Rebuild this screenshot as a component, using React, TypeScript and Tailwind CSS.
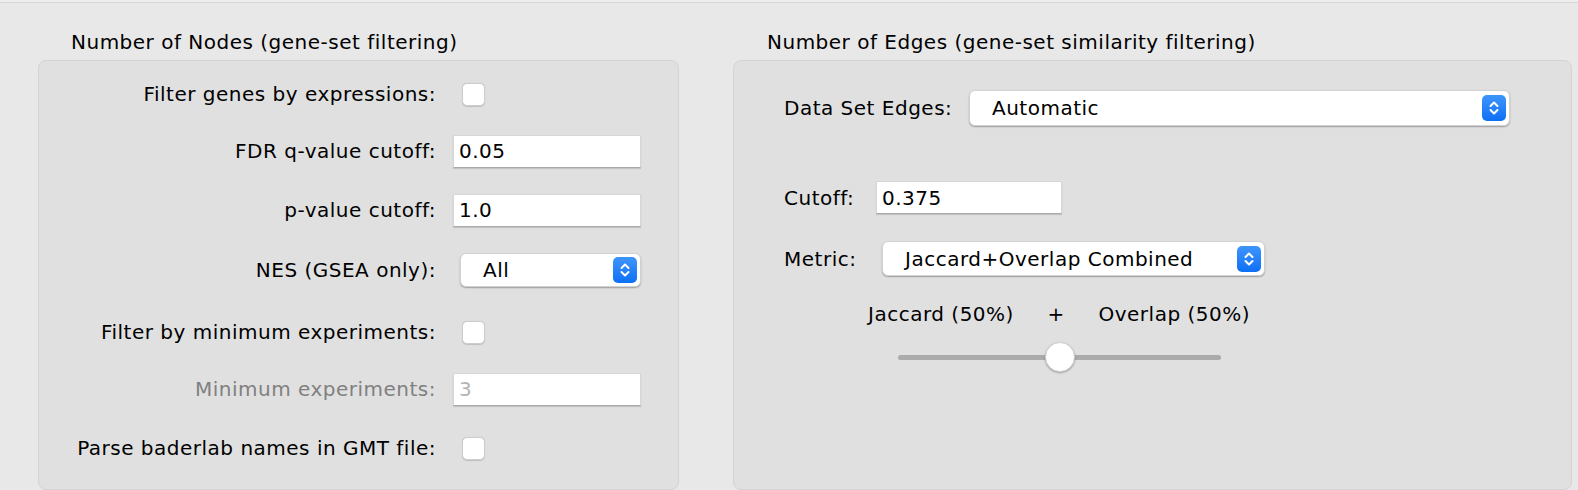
import React from "react";

const font = { fontFamily: '"DejaVu Sans", "Liberation Sans", sans-serif' };

const Stepper = () => (
  <div className="w-[24px] h-[26px] rounded-[5px] bg-gradient-to-b from-[#3d95fb] to-[#0c6ff5] flex items-center justify-center shrink-0">
    <svg width="12" height="18" viewBox="0 0 12 18" fill="none">
      <path d="M2.5 7 L6 3.5 L9.5 7" stroke="white" strokeWidth="2" strokeLinecap="round" strokeLinejoin="round" />
      <path d="M2.5 11 L6 14.5 L9.5 11" stroke="white" strokeWidth="2" strokeLinecap="round" strokeLinejoin="round" />
    </svg>
  </div>
);

const Select = ({ value, className }: { value: string; className: string }) => (
  <div
    className={`bg-white rounded-[6px] border border-[#d2d2d2] shadow-[0_1px_1.5px_rgba(0,0,0,0.3)] flex items-center justify-between pr-[3px] ${className}`}
  >
    <span className="pl-[22px] text-black">{value}</span>
    <Stepper />
  </div>
);

const TextInput = ({ value, className, disabled }: { value: string; className: string; disabled?: boolean }) => (
  <div
    className={`bg-white border border-[#d6d6d6] border-b-[#a9a9a9] shadow-[0_1px_1px_rgba(0,0,0,0.12)] flex items-center pl-[5px] ${disabled ? "text-[#b4b4b4]" : "text-black"} ${className}`}
  >
    {value}
  </div>
);

const Checkbox = () => (
  <div className="w-[23px] h-[23px] ml-[26px] rounded-[5px] bg-white border border-[#cdcdcd] shadow-[0_0.5px_1px_rgba(0,0,0,0.15)]" />
);

const Row = ({ label, children, className, muted }: { label: string; children: React.ReactNode; className: string; muted?: boolean }) => (
  <div className={`flex items-center h-[36px] ${className}`}>
    <div className={`w-[397px] text-right whitespace-nowrap ${muted ? "text-[#808080]" : "text-black"}`}>{label}</div>
    {children}
  </div>
);

export default function App() {
  return (
    <div style={font} className="w-[1578px] h-[490px] bg-[#e8e8e8] text-[20px] tracking-[0.5px] overflow-hidden">
      <div className="h-[3px] bg-[#eeeeee] border-b border-[#d8d8d8]" />
      <div className="flex pl-[38px] gap-[54px]">
        {/* Left: nodes */}
        <div className="w-[641px] flex flex-col">
          <div className="h-[57px] flex items-end pb-[6px] pl-[33px] text-black leading-[24px]">
            Number of Nodes (gene-set filtering)
          </div>
          <div className="h-[430px] rounded-[8px] bg-[#e0e0e0] border border-[#d3d3d3] flex flex-col pt-[15px]">
            <Row label="Filter genes by expressions:" className="">
              <Checkbox />
            </Row>
            <Row label="FDR q-value cutoff:" className="mt-[21px]">
              <TextInput value="0.05" className="ml-[17px] w-[188px] h-[33px]" />
            </Row>
            <Row label="p-value cutoff:" className="mt-[23px]">
              <TextInput value="1.0" className="ml-[17px] w-[188px] h-[33px]" />
            </Row>
            <Row label="NES (GSEA only):" className="mt-[24px]">
              <Select value="All" className="ml-[24px] w-[181px] h-[34px]" />
            </Row>
            <Row label="Filter by minimum experiments:" className="mt-[26px]">
              <Checkbox />
            </Row>
            <Row label="Minimum experiments:" className="mt-[21px]" muted>
              <TextInput value="3" className="ml-[17px] w-[188px] h-[33px]" disabled />
            </Row>
            <Row label="Parse baderlab names in GMT file:" className="mt-[23px]">
              <Checkbox />
            </Row>
          </div>
        </div>

        {/* Right: edges */}
        <div className="w-[839px] flex flex-col">
          <div className="h-[57px] flex items-end pb-[6px] pl-[34px] text-black leading-[24px]">
            Number of Edges (gene-set similarity filtering)
          </div>
          <div className="h-[430px] rounded-[8px] bg-[#e0e0e0] border border-[#d3d3d3] flex flex-col pt-[29px] pl-[50px] text-black">
            <div className="flex items-center h-[36px]">
              <div className="w-[185px]">Data Set Edges:</div>
              <Select value="Automatic" className="w-[541px] h-[36px]" />
            </div>
            <div className="flex items-center h-[33px] mt-[55px]">
              <div className="w-[92px]">Cutoff:</div>
              <TextInput value="0.375" className="w-[186px] h-[33px]" />
            </div>
            <div className="flex items-center h-[35px] mt-[27px]">
              <div className="w-[98px]">Metric:</div>
              <Select value="Jaccard+Overlap Combined" className="w-[383px] h-[35px]" />
            </div>
            <div className="flex items-center justify-between h-[24px] mt-[26px] ml-[84px] w-[382px]">
              <span>Jaccard (50%)</span>
              <span>+</span>
              <span>Overlap (50%)</span>
            </div>
            <div className="relative h-[30px] mt-[16px] ml-[114px] w-[323px] flex items-center">
              <div className="w-full h-[5px] rounded-full bg-[#ababab]" />
              <div className="absolute left-[147px] top-0 w-[30px] h-[30px] rounded-full bg-white border border-[#d0d0d0] shadow-[0_1px_2px_rgba(0,0,0,0.3)]" />
            </div>
          </div>
        </div>
      </div>
    </div>
  );
}
